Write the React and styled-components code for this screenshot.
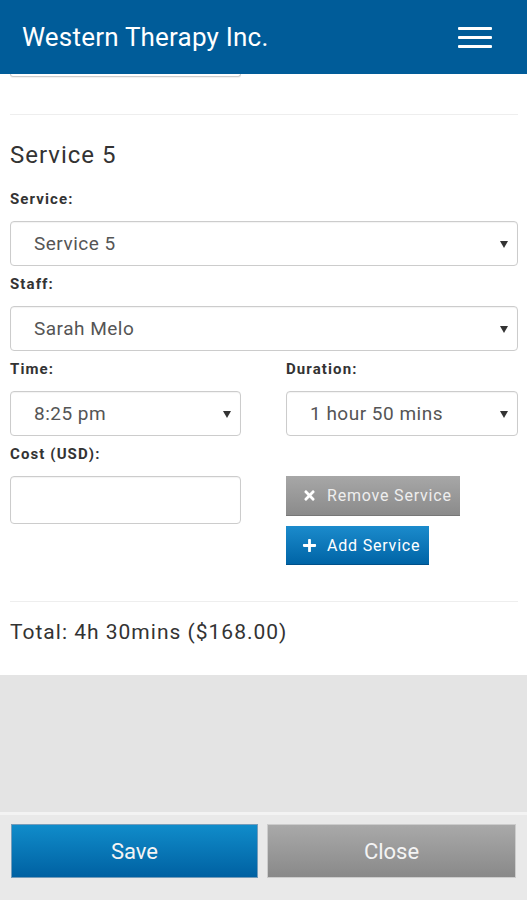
import React from 'react';
import styled, {createGlobalStyle} from 'styled-components';
import {FaTimes, FaPlus} from 'react-icons/fa';

const Global = createGlobalStyle`
body {
  margin: 0;
  font-family: Roboto, "Noto Sans", Arial, sans-serif;
  background: #e4e4e4;
}
* { box-sizing: border-box; }
`;

const Page = styled.div`
display: flex;
flex-direction: column;
min-height: 900px;
`;

const Header = styled.header`
height: 74px;
background-color: #005c99;
display: flex;
align-items: center;
justify-content: space-between;
padding: 0 35px 0 22px;
`;

const Title = styled.h1`
margin: 0;
font-size: 26px;
font-weight: 400;
letter-spacing: 0.2px;
color: #fff;
`;

const Burger = styled.div`
display: flex;
flex-direction: column;
gap: 6px;
width: 34px;
span {
  display: block;
  height: 3px;
  background: #fff;
  border-radius: 1px;
}
`;

const Content = styled.main`
background: #fff;
padding: 0 9px 0 10px;
box-shadow: 0 1px 2px rgba(0,0,0,.05);
`;

const Stub = styled.div`
width: 231px;
height: 3px;
border: 1px solid #ccc;
border-top: none;
border-radius: 0 0 4px 4px;
box-shadow: 0 1px 1px rgba(0,0,0,.06);
`;

const Rule = styled.hr`
border: none;
border-top: 1px solid #eee;
margin: ${({top}) => top}px 0 0;
`;

const Heading = styled.h2`
margin: 26px 0 0;
font-size: 24px;
line-height: 28px;
font-weight: 400;
letter-spacing: 1px;
color: #333;
`;

const Label = styled.label`
display: block;
margin: ${({first}) => (first ? 21 : 9)}px 0 13px;
font-size: 15px;
line-height: 18px;
font-weight: 700;
letter-spacing: 1.1px;
color: #333;
`;

const Select = styled.div`
height: 45px;
border: 1px solid #ccc;
border-radius: 4px;
display: flex;
align-items: center;
justify-content: space-between;
padding: 0 9px 0 23px;
font-size: 19px;
letter-spacing: 0.5px;
color: #555;
box-shadow: inset 0 1px 1px rgba(0,0,0,.05);
`;

const Arrow = styled.span`
width: 0;
height: 0;
border-left: 4px solid transparent;
border-right: 4px solid transparent;
border-top: 7px solid #333;
margin-top: 2px;
`;

const Grid = styled.div`
display: grid;
grid-template-columns: 231px 232px;
column-gap: 45px;
`;

const Input = styled.div`
height: 48px;
border: 1px solid #ccc;
border-radius: 4px;
box-shadow: inset 0 1px 1px rgba(0,0,0,.05);
`;

const Actions = styled.div`
display: flex;
flex-direction: column;
align-items: flex-start;
gap: 10px;
`;

const SmallButton = styled.button`
height: ${({h}) => h}px;
width: ${({w}) => w}px;
border: none;
border-radius: 0;
display: flex;
align-items: center;
gap: 10px;
padding: 0 0 0 16px;
white-space: nowrap;
font-family: inherit;
font-size: 16px;
letter-spacing: 0.8px;
color: ${({variant}) => (variant === 'blue' ? '#fff' : '#eee')};
background: ${({variant}) => (variant === 'blue'
  ? 'linear-gradient(#1b8bcc, #0064a6)'
  : 'linear-gradient(#a7a7a7, #8b8b8b)')};
border-bottom: 1px solid ${({variant}) => (variant === 'blue' ? '#00508a' : '#777')};
svg { font-size: 15px; flex: none; color: #fff; }
`;

const Total = styled.p`
margin: 0;
padding: 18px 0 30px;
font-size: 21px;
line-height: 25px;
letter-spacing: 1px;
color: #333;
`;

const Filler = styled.div`
flex: 1;
background: #e4e4e4;
`;

const Footer = styled.footer`
border-top: 3px solid #f3f3f3;
background: #e9e9e9;
display: grid;
grid-template-columns: 245px 247px;
column-gap: 11px;
padding: 10px 12px 23px;
`;

const BigButton = styled.button`
height: 52px;
border: none;
font-family: inherit;
font-size: 22px;
color: #f4f4f4;
background: ${({variant}) => (variant === 'blue'
  ? 'linear-gradient(#108cca, #0061a2)'
  : 'linear-gradient(#a9a9a9, #898989)')};
box-shadow: 0 0 0 1px ${({variant}) => (variant === 'blue' ? 'rgba(0,80,140,.5)' : 'rgba(0,0,0,.12)')};
`;

export default function App() {
  return (
    <Page>
      <Global/>
      <Header>
        <Title>Western Therapy Inc.</Title>
        <Burger><span/><span/><span/></Burger>
      </Header>
      <Content>
        <Stub/>
        <Rule top={37}/>
        <Heading>Service 5</Heading>
        <Label first>Service:</Label>
        <Select>Service 5<Arrow/></Select>
        <Label>Staff:</Label>
        <Select>Sarah Melo<Arrow/></Select>
        <Grid>
          <div>
            <Label>Time:</Label>
            <Select>8:25 pm<Arrow/></Select>
          </div>
          <div>
            <Label>Duration:</Label>
            <Select>1 hour 50 mins<Arrow/></Select>
          </div>
          <div>
            <Label>Cost (USD):</Label>
            <Input/>
          </div>
          <div>
            <Label style={{visibility: 'hidden'}}>&nbsp;</Label>
            <Actions>
              <SmallButton w={174} h={40}><FaTimes/>Remove Service</SmallButton>
              <SmallButton variant="blue" w={143} h={39}><FaPlus/>Add Service</SmallButton>
            </Actions>
          </div>
        </Grid>
        <Rule top={36}/>
        <Total>Total: 4h 30mins ($168.00)</Total>
      </Content>
      <Filler/>
      <Footer>
        <BigButton variant="blue">Save</BigButton>
        <BigButton>Close</BigButton>
      </Footer>
    </Page>
  );
}
